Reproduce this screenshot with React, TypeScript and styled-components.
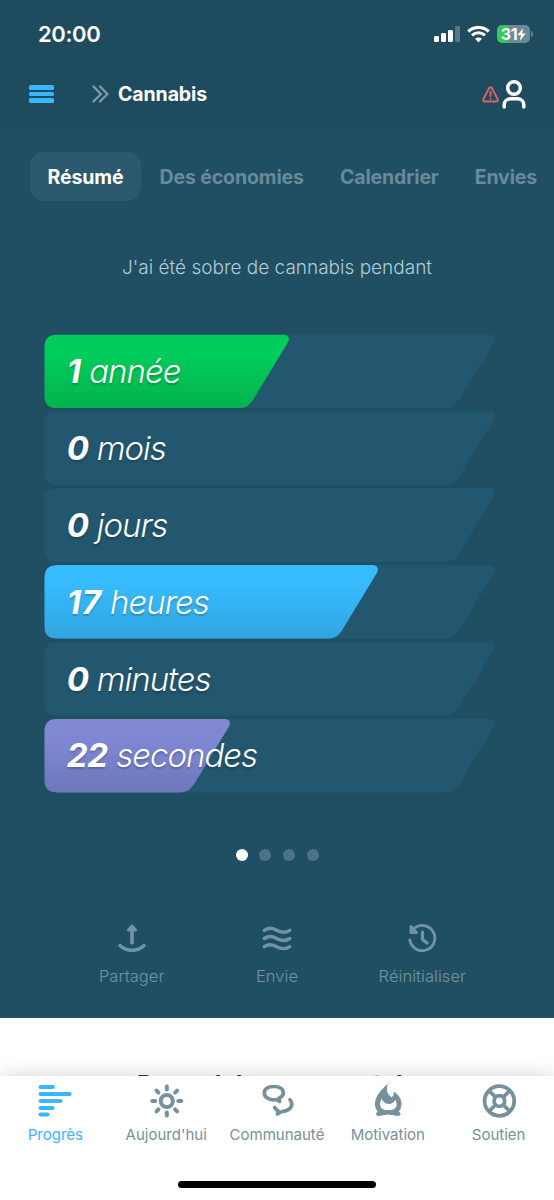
import React from 'react';
import styled, { createGlobalStyle } from 'styled-components';

const GlobalStyle = createGlobalStyle`
  * { box-sizing: border-box; }
  body { margin: 0; background: #fff; font-family: Inter, "Liberation Sans", sans-serif; }
`;

const Screen = styled.div`
  position: relative;
  width: 554px;
  height: 1200px;
  overflow: hidden;
  background: #fff;
`;

const Hero = styled.main`
  height: 1018px;
  background: #204f64;
  display: flex;
  flex-direction: column;
`;

const TopArea = styled.header`
  height: 129px;
  background: #1f4b5f;
  flex: none;
`;

const StatusBar = styled.div`
  height: 68px;
  padding: 0 21px 0 38px;
  display: flex;
  align-items: center;
  justify-content: space-between;
`;

const Clock = styled.span`
  color: #fff;
  font-size: 22px;
  line-height: 28px;
  font-weight: 600;
  letter-spacing: -0.4px;
`;

const StatusIcons = styled.div`
  display: flex;
  align-items: center;
  gap: 7px;
`;

const BatteryWrap = styled.div`
  display: flex;
  align-items: center;
  gap: 1px;
`;

const Battery = styled.div`
  width: 33px;
  height: 18px;
  border-radius: 5px;
  background: linear-gradient(90deg, #34c759 0 11px, #6e8996 11px);
  display: flex;
  align-items: center;
  justify-content: center;
  color: #fff;
  font-size: 16px;
  font-weight: 700;
  letter-spacing: -0.4px;
`;

const BatteryTip = styled.div`
  width: 2px;
  height: 6px;
  border-radius: 0 2px 2px 0;
  background: #5d7b89;
`;

const NavBar = styled.div`
  height: 52px;
  padding: 0 28px 0 29px;
  display: flex;
  align-items: center;
`;

const MenuButton = styled.div`
  width: 25px;
  display: flex;
  flex-direction: column;
  gap: 2.4px;
`;

const MenuLine = styled.span`
  height: 4.2px;
  border-radius: 1.5px;
  background: #38b6ff;
`;

const Title = styled.h1`
  margin: 0 auto 0 9px;
  color: #fff;
  font-size: 19.5px;
  line-height: 26px;
  font-weight: 650;
  letter-spacing: -0.1px;
`;

const Chevrons = styled.svg`
  margin-left: 37px;
`;

const Tabs = styled.nav`
  margin: 23px 0 0 29.500px;
  height: 49px;
  display: flex;
  flex: none;
`;

const Tab = styled.div<{ $active?: boolean }>`
  height: 49px;
  padding: 0 18px;
  border-radius: 14px;
  display: flex;
  align-items: center;
  white-space: nowrap;
  font-size: 19.5px;
  font-weight: 650;
  letter-spacing: -0.12px;
  color: ${p => (p.$active ? '#fff' : '#688a9b')};
  background: ${p => (p.$active ? '#2c596d' : 'transparent')};
`;

const Caption = styled.p`
  margin: 54px 0 0;
  height: 26px;
  line-height: 26px;
  text-align: center;
  color: #b4cbd6;
  font-size: 19px;
  font-weight: 300;
  letter-spacing: 0;
`;

const Bars = styled.section`
  margin: 53.4px 0 0 44.3px;
  display: flex;
  flex-direction: column;
  gap: 3px;
`;

const outline = (w: number) =>
  `path('M13 0 H${w - 7} C${w - 1} 0 ${w + 1} 3 ${w - 1.5} 8 L${w - 36} 65 C${w - 40} 71 ${w - 44} 73.8 ${w - 51} 73.8 H13 C4 73.8 0 70 0 61 V13 C0 4 4 0 13 0 Z')`;

const Track = styled.div`
  display: grid;
  width: 452px;
  height: 73.9px;
  align-items: center;
  background: #23576f;
  clip-path: ${outline(451)};
`;

const Fill = styled.div<{ $w: number; $from: string; $to: string }>`
  grid-area: 1 / 1;
  width: ${p => p.$w}px;
  height: 73.9px;
  background: linear-gradient(180deg, ${p => p.$from} 25%, ${p => p.$to} 100%);
  clip-path: ${p => outline(p.$w)};
`;

const BarLabel = styled.div`
  grid-area: 1 / 1;
  padding: 0 0 0.6px 22.4px;
  z-index: 1;
  color: #fff;
  font-size: 33px;
  line-height: 44px;
  font-style: italic;
  font-weight: 300;
  letter-spacing: -1px;
  text-shadow: 0 2px 2px rgba(0, 0, 0, 0.22);
  white-space: pre;
`;

const Amount = styled.b<{ $spacing: number }>`
  font-weight: 700;
  letter-spacing: ${p => p.$spacing}px;
`;

const Dots = styled.div`
  margin: 56.700px 0 0 0.5px;
  display: flex;
  justify-content: center;
  gap: 11.7px;
`;

const Dot = styled.span<{ $active?: boolean }>`
  width: 12px;
  height: 12px;
  border-radius: 50%;
  background: ${p => (p.$active ? '#fff' : '#4d7283')};
`;

const Actions = styled.div`
  margin: 59.300px 59px 0;
  display: grid;
  grid-template-columns: repeat(3, 1fr);
`;

const Action = styled.div`
  display: flex;
  flex-direction: column;
  align-items: center;
  gap: 10px;
  color: #7194a5;
  font-size: 16.5px;
  line-height: 22px;
  font-weight: 300;
  letter-spacing: 0.05px;
`;

const NextSection = styled.h2`
  margin: 50.5px 0 0 137px;
  color: #333436;
  font-size: 24.4px;
  line-height: 30px;
  font-weight: 700;
  white-space: nowrap;
`;

const TabBar = styled.footer`
  position: absolute;
  left: 0;
  right: 0;
  bottom: 0;
  height: 124px;
  background: #fff;
  box-shadow: 0 0 20px rgba(0, 0, 0, 0.17);
  display: flex;
  flex-direction: column;
  align-items: center;
`;

const TabBarItems = styled.div`
  width: 100%;
  height: 105px;
  padding-top: 7px;
  display: grid;
  grid-template-columns: repeat(5, 1fr);
`;

const TabBarItem = styled.div<{ $active?: boolean }>`
  display: flex;
  flex-direction: column;
  align-items: center;
  gap: 5px;
  font-size: 15px;
  line-height: 22px;
  letter-spacing: 0;
  white-space: nowrap;
  color: ${p => (p.$active ? '#38b6ff' : '#76909d')};
`;

const HomeIndicator = styled.div`
  width: 198px;
  height: 7px;
  border-radius: 4px;
  background: #000;
`;

const Icon = styled.svg`
  display: block;
  fill: none;
  stroke: currentColor;
  stroke-linecap: round;
  stroke-linejoin: round;
  overflow: visible;
`;

const ProfileIcon = styled(Icon)`
  margin-left: 3px;
`;

const rows = [
  { n: '1', unit: 'année', spacing: 0, w: 245, from: '#00cd5b', to: '#04b34d' },
  { n: '0', unit: 'mois', spacing: -0.5 },
  { n: '0', unit: 'jours', spacing: -0.5 },
  { n: '17', unit: 'heures', spacing: 0.8, w: 334, from: '#37bbff', to: '#30a5df' },
  { n: '0', unit: 'minutes', spacing: -0.5 },
  { n: '22', unit: 'secondes', spacing: -0.2, w: 186, from: '#8088d4', to: '#6c77bb' },
];

export default function App() {
  return (
    <Screen>
      <GlobalStyle />
      <Hero>
        <TopArea>
          <StatusBar>
            <Clock>20:00</Clock>
            <StatusIcons>
              <svg width="26" height="16" viewBox="0 0 26 16" fill="#fff">
                <rect x="0" y="10" width="5" height="6" rx="1.3" />
                <rect x="7" y="7" width="5" height="9" rx="1.3" />
                <rect x="14" y="4" width="5" height="12" rx="1.3" />
                <rect x="21" y="0" width="5" height="16" rx="1.3" opacity=".25" />
              </svg>
              <svg width="23" height="17" viewBox="0 0 23 17" fill="none" stroke="#fff">
                <path d="M1.2 5.5C7 .1 16 .1 21.8 5.5" strokeWidth="3.1" />
                <path d="M5 9.4C8.8 6 14.2 6 18 9.4" strokeWidth="3" />
                <path d="M11.5 16.5 8 12.8C10 11.1 13 11.1 15 12.8Z" fill="#fff" stroke="none" />
              </svg>
              <BatteryWrap>
                <Battery>
                  31
                  <svg width="9" height="13" viewBox="0 0 9 13" fill="#fff">
                    <path d="M6.2 0 .4 7.3H4L2.8 13 8.7 5.4H5.1Z" />
                  </svg>
                </Battery>
                <BatteryTip />
              </BatteryWrap>
            </StatusIcons>
          </StatusBar>
          <NavBar>
            <MenuButton>
              <MenuLine />
              <MenuLine />
              <MenuLine />
            </MenuButton>
            <Chevrons width="18" height="18" viewBox="0 0 18 18" fill="none" stroke="#7e9dac" strokeWidth="2.2" strokeLinecap="round" strokeLinejoin="round">
              <path d="M2.500 1.500 10 9l-7.500 7.500M9 1.500 16.500 9 9 16.500" />
            </Chevrons>
            <Title>Cannabis</Title>
            <Icon width="17" height="17" viewBox="0 0 17 17" strokeWidth="1.9" color="#db6467">
              <path d="M7.200 2 1.300 13.200c-.5 1.300 0 2.300 1.300 2.300h11.800c1.300 0 1.800-1 1.300-2.300L9.800 2C9.200 1 7.800 1 7.200 2ZM8.500 6v4M8.500 12.700v.1" />
            </Icon>
            <ProfileIcon width="24" height="29" viewBox="0 0 24 29" strokeWidth="3.500" color="#fff">
              <circle cx="12" cy="8" r="6.300" />
              <path d="M2.200 27v-2c0-3.800 2.800-6.200 6.500-6.200h6.600c3.700 0 6.500 2.400 6.500 6.200v2" />
            </ProfileIcon>
          </NavBar>
        </TopArea>
        <Tabs>
          <Tab $active>Résumé</Tab>
          <Tab>Des économies</Tab>
          <Tab>Calendrier</Tab>
          <Tab>Envies</Tab>
        </Tabs>
        <Caption>J'ai été sobre de cannabis pendant</Caption>
        <Bars>
          {rows.map(r => (
            <Track key={r.unit}>
              {r.w && <Fill $w={r.w} $from={r.from!} $to={r.to!} />}
              <BarLabel>
                <Amount $spacing={r.spacing}>{r.n}</Amount> {r.unit}
              </BarLabel>
            </Track>
          ))}
        </Bars>
        <Dots>
          <Dot $active />
          <Dot />
          <Dot />
          <Dot />
        </Dots>
        <Actions>
          <Action>
            <Icon width="30" height="34" viewBox="0 0 30 34" strokeWidth="3.600">
              <path d="M15 22V6" />
              <path d="M11.500 9 15 5l3.500 4Z" strokeWidth="3" />
              <path d="M3 24.500c7 6.500 17 6.500 24 0" />
            </Icon>
            Partager
          </Action>
          <Action>
            <Icon width="30" height="34" viewBox="0 0 30 34" strokeWidth="3.400">
              <path d="M2.300 9.300c4-2.800 7.700-2.500 11.700-.3s9 3.600 13.700.3M2.300 17.500c4-2.800 7.700-2.500 11.700-.3s9 3.600 13.700.3M2.300 25.700c4-2.800 7.700-2.500 11.700-.3s9 3.600 13.700.3" />
            </Icon>
            Envie
          </Action>
          <Action>
            <Icon width="30" height="34" viewBox="0 0 30 34" strokeWidth="2.800">
              <path d="M2.800 19A12.600 12.600 0 1 0 6 8.500L4 11" />
              <path d="M4 5.500v6h5.500Z" fill="currentColor" />
              <path d="M15.500 11v7.500l4.500 3.500" strokeWidth="3.200" />
            </Icon>
            Réinitialiser
          </Action>
        </Actions>
      </Hero>
      <NextSection>Record de mon mental</NextSection>
      <TabBar>
        <TabBarItems>
          <TabBarItem $active>
            <Icon width="34" height="36" viewBox="0 0 34 36" strokeWidth="4.100">
              <path d="M2.500 4h12.300M2.500 11h29M2.500 18h20M2.500 25h12M2.500 31.500h7" />
            </Icon>
            Progrès
          </TabBarItem>
          <TabBarItem>
            <Icon width="34" height="36" viewBox="0 0 34 36" strokeWidth="4">
              <circle cx="17.800" cy="18" r="6" />
              <path d="M17.800 3.500v3M17.800 29.500v3M3.300 18h3M29.300 18h3M7.500 7.700l2 2M26.100 26.300l2 2M28.100 7.700l-2 2M9.500 26.300l-2 2" />
            </Icon>
            Aujourd'hui
          </TabBarItem>
          <TabBarItem>
            <Icon width="34" height="36" viewBox="0 0 34 36" strokeWidth="3.700">
              <path d="M13.800 3.500C8 3.500 4.300 6.200 4.300 10s3.700 6.800 9.500 6.800c1 0 2 0 2.800-.3l3 2-.6-3.300c2.700-1.200 4.300-3 4.300-5.200 0-3.800-3.700-6.500-9.500-6.500Z" />
              <path d="M30 16.800c4.500 5.500-.5 11.500-8 11.700l-4.500 2.500.5-3.300c-1.500-.6-2.600-1.700-3.300-3" />
            </Icon>
            Communauté
          </TabBarItem>
          <TabBarItem>
            <Icon width="34" height="36" viewBox="0 0 34 36" strokeWidth="1">
              <path
                fill="currentColor"
                fillRule="evenodd"
                d="M16 2C11 6.500 4.500 13 4.500 21c0 3.400 1.200 6 3.100 8-1.500 0-2.100.8-2.100 1.800 0 1.300.9 2 2.200 1.700L17 30.900l9.800 1.600c1.300.3 2.200-.4 2.200-1.700 0-1-.6-1.800-2.100-1.800 1.900-2 3.100-4.600 3.100-8 0-5-2.700-9-6.800-11.800.2 3-1 4.800-2.700 5.500C16.500 12 14.300 8 16 2ZM11 14.300c.5 4 3.200 6.200 6.600 6.200 3.200 0 5.700-1.700 6.800-4.500 3.500 5.500 1.800 10.500-4.400 11.500h-5.500C8.400 26.500 6.700 20.500 11 14.300Z"
              />
            </Icon>
            Motivation
          </TabBarItem>
          <TabBarItem>
            <Icon width="34" height="36" viewBox="0 0 34 36" strokeWidth="3.800">
              <circle cx="17.400" cy="18" r="14.800" />
              <circle cx="17.400" cy="18" r="5.300" />
              <path d="m7.900 8.500 5.500 5.500M21.400 22l5.500 5.500M26.900 8.500 21.400 14M13.400 22l-5.500 5.500" />
            </Icon>
            Soutien
          </TabBarItem>
        </TabBarItems>
        <HomeIndicator />
      </TabBar>
    </Screen>
  );
}
